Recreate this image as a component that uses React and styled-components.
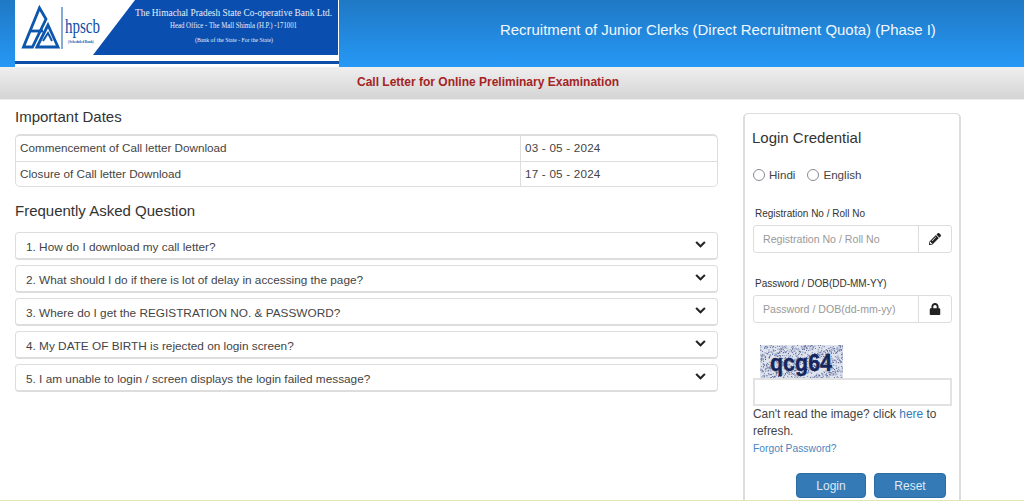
import React from "react";
import styled, { createGlobalStyle } from "styled-components";
import { FaChevronDown, FaLock, FaPencilAlt } from "react-icons/fa";

const Global = createGlobalStyle`
  html, body { margin: 0; padding: 0; height: 501px; overflow: hidden; background: #fff; }
  body { font-family: "Liberation Sans", Arial, sans-serif; color: #333; }
  * { box-sizing: border-box; }
`;

const Page = styled.div`height: 501px; position: relative; overflow: hidden;`;
const Header = styled.header`
  height: 67px; display: flex; padding-left: 15px;
  background: linear-gradient(#1f78c4, #2698f5);
`;
const LogoSvg = styled.svg`width: 324px; height: 67px; display: block; flex: none;`;
const HeaderTitle = styled.h1`
  margin: 21px 0 0 161px; font-size: 14.95px; line-height: 18px; font-weight: 400; color: #f2f7fc; white-space: nowrap;
`;
const SubHeader = styled.div`
  height: 33px; padding: 6px 0 0 357px; border-bottom: 1px solid #eee;
  background: linear-gradient(#efefef, #d4d4d4);
  font-size: 12px; line-height: 18px; font-weight: 700; color: #a52323;
`;
const Main = styled.main`
  display: grid; grid-template-columns: 703px 218px; column-gap: 25px; padding: 7px 0 0 15px;
`;
const Section = styled.section`display: flex; flex-direction: column;`;
const Heading = styled.h2`
  margin: 0; font-size: 15px; line-height: 20px; font-weight: 400; color: #333;
`;
const DatesTable = styled.div`
  margin-top: 7px; border: 1px solid #ddd; border-top-width: 2px; border-radius: 5px; overflow: hidden;
  margin-bottom: 14px;
`;
const DateRow = styled.div`
  display: grid; grid-template-columns: 504px 1fr; height: 25px;
  & + & { border-top: 1px solid #ddd; height: 25px; }
`;
const DateCell = styled.div`
  padding-left: 4px; font-size: 11.7px; line-height: 24px; color: #444;
  & + & { border-left: 1px solid #ddd; letter-spacing: 0.2px; }
`;
const Faq = styled.div`margin-top: 11px; display: flex; flex-direction: column; gap: 5px;`;
const FaqItem = styled.div`
  height: 28px; padding: 0 11px 0 10px; display: flex; align-items: center; justify-content: space-between;
  border: 1px solid #ddd; border-bottom-width: 2px; border-radius: 4px;
  font-size: 11.8px; color: #444;
  span { position: relative; top: 1px; }
  svg { font-size: 11px; color: #222; margin-top: -2px; stroke: #222; stroke-width: 20; }
`;
const Panel = styled.aside`
  margin-top: 6px; height: 394px; border: 1px solid #ddd; border-width: 1px 2px; border-radius: 5px; padding: 15px 8px 0 7px;
`;
const PanelTitle = styled.h3`margin: 0; font-size: 15px; line-height: 18px; font-weight: 400; color: #333;`;
const RadioRow = styled.div`margin-top: 18px; display: flex; align-items: center; font-size: 11.6px; color: #444; height: 18px;`;
const Radio = styled.span`
  width: 12px; height: 12px; border: 1.5px solid #8a8a94; border-radius: 50%; margin: 1px 4px 0 ${p => p.$first ? "1px" : "12px"};
`;
const FieldLabel = styled.div`margin: ${p => p.$mt} 0 0 3px; font-size: 10px; line-height: 14px; color: #333;`;
const InputGroup = styled.div`
  margin: 4px 0 0 1px; width: 199px; height: 28px; display: flex; border: 1px solid #ddd; border-radius: 3px;
`;
const Placeholder = styled.div`flex: 1; padding-left: 9px; font-size: 10.6px; line-height: 26px; color: #999;`;
const Addon = styled.div`
  width: 33px; border-left: 1px solid #ddd; display: flex; align-items: center; justify-content: center;
  font-size: 12px; color: #222;
`;
const Captcha = styled.svg`display: block; margin: 22px 0 0 8px; width: 83px; height: 33px;`;
const CaptchaText = styled.text`font: 700 24px "Liberation Sans", sans-serif; fill: #14265c; stroke: #14265c; stroke-width: 0.4;`;
const CaptchaInput = styled.div`margin-left: 1px; width: 199px; height: 28px; border: 2px solid #e2e2e2;`;
const Help = styled.p`margin: 0 0 0 1px; font-size: 11.9px; line-height: 17px; color: #444;`;
const Link = styled.a`color: #337ab7;`;
const Forgot = styled.a`display: block; margin: 2px 0 0 1px; font-size: 10.3px; line-height: 14px; color: #4b87c0;`;
const Buttons = styled.div`margin-top: 17px; margin-left: 44px; display: flex; gap: 8px;`;
const Btn = styled.button`
  width: ${p => p.$w}px; height: 25px; border: 1px solid #2e6da4; border-radius: 4px; background: #337ab7;
  color: #dfe9f3; font: 12px "Liberation Sans", sans-serif; padding: 0;
`;
const FooterLine = styled.div`position: absolute; left: 0; right: 0; bottom: 0; height: 1px; background: #dfe8b0;`;

const faqs = [
  "1. How do I download my call letter?",
  "2. What should I do if there is lot of delay in accessing the page?",
  "3. Where do I get the REGISTRATION NO. & PASSWORD?",
  "4. My DATE OF BIRTH is rejected on login screen?",
  "5. I am unable to login / screen displays the login failed message?",
];

const noise = Array.from({ length: 800 }, (_, i) => ({
  x: (i * 47.3 + (i * i) % 13) % 83,
  y: (i * 23.7 + (i * i * 3) % 17) % 33,
}));

function Logo() {
  return (
    <LogoSvg viewBox="0 0 324 67">
      <rect width="324" height="67" fill="#fff" />
      <polygon points="120,0 323,0 323,55 78,55" fill="#0a4fb0" />
      <rect x="0" y="61" width="324" height="3" fill="#0d4ea6" />
      <g fill="none" stroke="#0d56ad" strokeWidth="2.8" strokeLinejoin="miter">
        <path d="M8.5 47 L24.5 8 L31 19 L17.5 47 Z" />
        <path d="M15 31 L28 31" />
        <path d="M22 47 L33 25 L43 47 Z" />
        <path d="M28 41 L33 33 L37 41" strokeWidth="2" />
      </g>
      <rect x="46.5" y="7" width="1" height="42" fill="#0d56ad" />
      <text x="50" y="33" fontFamily="Liberation Serif" fontSize="20" fill="#0d4ea6" textLength="35" lengthAdjust="spacingAndGlyphs">hpscb</text>
      <text x="53" y="42.5" fontFamily="Liberation Serif" fontSize="3.4" fill="#0d56ad" fontWeight="700">(Scheduled Bank)</text>
      <g fontFamily="Liberation Serif" fill="#e6edf7">
        <text x="120" y="16" fontSize="10.5" textLength="197" lengthAdjust="spacingAndGlyphs">The Himachal Pradesh State Co-operative Bank Ltd.</text>
        <text x="155" y="28" fontSize="7.5" textLength="127" lengthAdjust="spacingAndGlyphs">Head Office - The Mall Shimla (H.P.) -171001</text>
        <text x="180" y="41.5" fontSize="5.4" textLength="78" lengthAdjust="spacingAndGlyphs">(Bank of the State - For the State)</text>
      </g>
    </LogoSvg>
  );
}

export default function App() {
  return (
    <Page>
      <Global />
      <Header>
        <Logo />
        <HeaderTitle>Recruitment of Junior Clerks (Direct Recruitment Quota) (Phase I)</HeaderTitle>
      </Header>
      <SubHeader>Call Letter for Online Preliminary Examination</SubHeader>
      <Main>
        <Section>
          <Heading>Important Dates</Heading>
          <DatesTable>
            <DateRow>
              <DateCell>Commencement of Call letter Download</DateCell>
              <DateCell>03 - 05 - 2024</DateCell>
            </DateRow>
            <DateRow>
              <DateCell>Closure of Call letter Download</DateCell>
              <DateCell>17 - 05 - 2024</DateCell>
            </DateRow>
          </DatesTable>
          <Heading>Frequently Asked Question</Heading>
          <Faq>
            {faqs.map((q) => (
              <FaqItem key={q}>
                <span>{q}</span>
                <FaChevronDown />
              </FaqItem>
            ))}
          </Faq>
        </Section>
        <Panel>
          <PanelTitle>Login Credential</PanelTitle>
          <RadioRow>
            <Radio $first /> Hindi
            <Radio /> English
          </RadioRow>
          <FieldLabel $mt="24px">Registration No / Roll No</FieldLabel>
          <InputGroup>
            <Placeholder>Registration No / Roll No</Placeholder>
            <Addon><FaPencilAlt /></Addon>
          </InputGroup>
          <FieldLabel $mt="24px">Password / DOB(DD-MM-YY)</FieldLabel>
          <InputGroup>
            <Placeholder>Password / DOB(dd-mm-yy)</Placeholder>
            <Addon><FaLock /></Addon>
          </InputGroup>
          <Captcha viewBox="0 0 83 33">
            <rect width="83" height="33" fill="#dfe3ee" />
            {noise.map((n, i) => (
              <rect key={i} x={n.x} y={n.y} width="1" height="1" fill="#46568e" opacity="0.75" />
            ))}
            <CaptchaText x="10" y="26" textLength="62" lengthAdjust="spacingAndGlyphs">qcg64</CaptchaText>
          </Captcha>
          <CaptchaInput />
          <Help>
            Can't read the image? click <Link>here</Link> to refresh.
          </Help>
          <Forgot>Forgot Password?</Forgot>
          <Buttons>
            <Btn $w={70}>Login</Btn>
            <Btn $w={72}>Reset</Btn>
          </Buttons>
        </Panel>
      </Main>
      <FooterLine />
    </Page>
  );
}
